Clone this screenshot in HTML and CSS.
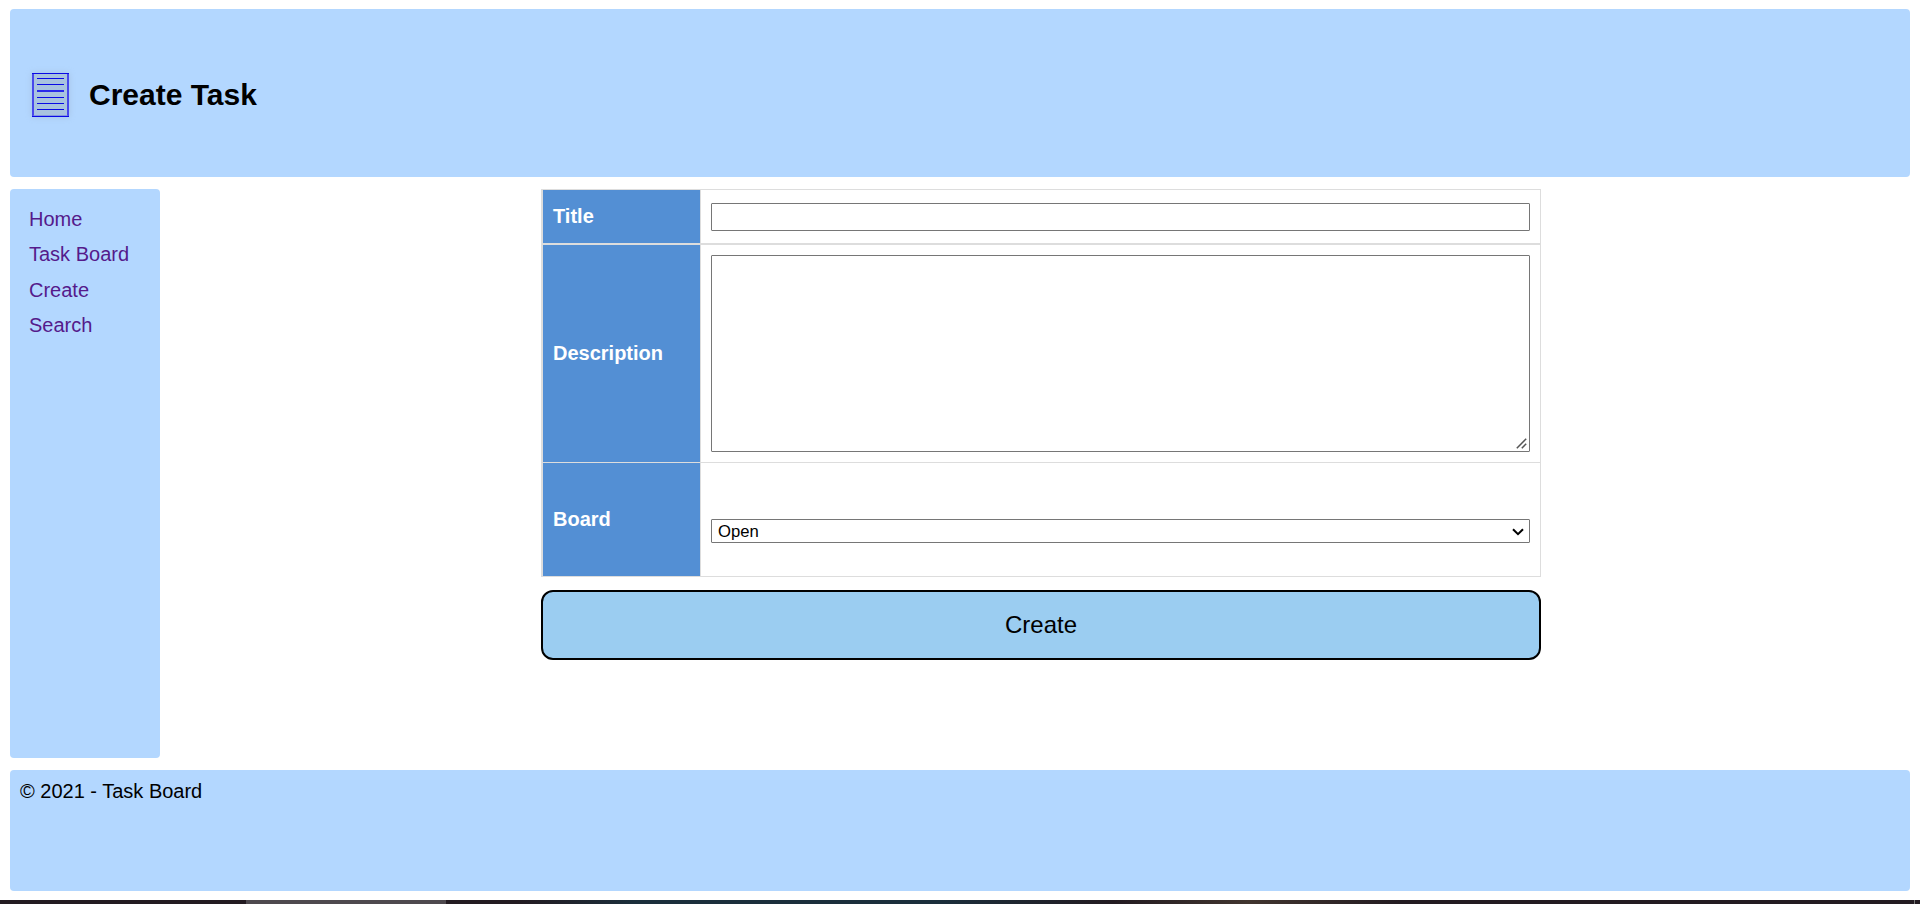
FILE: index.html
```html
<!DOCTYPE html>
<html lang="en">
<head>
<meta charset="utf-8">
<title>Create Task</title>
<link rel="stylesheet" href="styles.css">
</head>
<body>
<div class="page">
  <header class="header panel">
    <svg class="logo" width="57" height="65" viewBox="22 62 57 65">
      <defs><filter id="soft" x="-50%" y="-50%" width="200%" height="200%"><feGaussianBlur stdDeviation="3"/></filter></defs>
      <rect x="32" y="73" width="37" height="44" fill="#96abc4" opacity=".5" filter="url(#soft)"/>
      <rect x="33" y="73" width="35" height="43" fill="#a9c3df"/>
      <path d="M33 73v43M68 73v43" stroke="#4848ec" stroke-width="2"/>
      <path d="M33 115.5h35" stroke="#6a76e4" stroke-opacity=".6"/>
      <path d="M32 73.5h37M32 116.5h37" stroke="#0a0ae6"/>
      <path d="M37 78.5h27M37 84.5h27M37 97.5h27M37 103.5h27M37 109.5h27" stroke="#0a0ae6"/>
      <path d="M37 91h27" stroke="#2a2aea" stroke-width="2"/>
    </svg>
    <h1 class="heading">Create Task</h1>
  </header>
  <div class="middle">
    <nav class="nav panel">
      <a class="nav-link" href="#home">Home</a>
      <a class="nav-link" href="#board">Task Board</a>
      <a class="nav-link" href="#create">Create</a>
      <a class="nav-link" href="#search">Search</a>
    </nav>
    <main class="main">
      <form class="form">
        <div class="fields">
          <div class="row row-title">
            <label class="label" for="title">Title</label>
            <div class="cell"><input class="control input" id="title" type="text"></div>
          </div>
          <div class="row row-description">
            <label class="label" for="description">Description</label>
            <div class="cell"><div class="textarea-wrap">
              <textarea class="control textarea" id="description"></textarea>
              <svg class="grip" width="11" height="11" viewBox="0 0 11 11"><path d="M.8 10.2l9.4-9.4M5.8 10.2l4.4-4.4" fill="none" stroke="#555" stroke-width="1.5"/></svg>
            </div></div>
          </div>
          <div class="row row-board">
            <label class="label" for="board">Board</label>
            <div class="cell"><div class="select-wrap">
              <select class="control select" id="board"><option>Open</option></select>
              <svg class="arrow" width="12" height="8" viewBox="0 0 12 8"><path d="M1 1.2l5 5 5-5" fill="none" stroke="#000" stroke-width="2"/></svg>
            </div></div>
          </div>
        </div>
        <button class="submit" type="button">Create</button>
      </form>
    </main>
  </div>
  <footer class="footer panel">© 2021 - Task Board</footer>
  <div class="taskbar"><div class="taskbar-active"></div><div class="taskbar-edge"></div></div>
</div>
</body>
</html>
```
FILE: styles.css
```css
* { box-sizing: border-box; }
body {
  margin: 0;
  background: #fff;
  color: #000;
  font: 20px/23px "Liberation Sans", Arial, sans-serif;
  overflow: hidden;
}
.page {
  display: flex;
  flex-direction: column;
  height: 904px;
  padding-top: 9px;
}
.panel { background: #b3d7ff; border-radius: 4px; }
.header {
  display: flex;
  align-items: center;
  gap: 10px;
  height: 168px;
  margin: 0 10px 12px;
  padding: 3px 12px 0;
}
.logo { display: block; flex: none; }
.heading { margin: 0; font-size: 30px; line-height: 34px; }
.middle { display: flex; height: 569px; padding: 0 10px; }
.nav {
  display: flex;
  flex-direction: column;
  width: 150px;
  padding: 13px 19px;
}
.nav-link { color: #551a8b; text-decoration: none; line-height: 35.4px; white-space: nowrap; }
.main { flex: 1; padding-left: 381px; }
.form { display: flex; flex-direction: column; gap: 13px; width: 1000px; }
.fields { border: 1px solid #ddd; border-left-width: 2px; }
.row { display: flex; border-bottom: 1px solid #ddd; }
.row-title { height: 55px; border-bottom-width: 2px; }
.row-description { height: 218px; }
.row-board { height: 113px; border-bottom: 0; }
.label {
  display: flex;
  align-items: center;
  width: 157px;
  padding-left: 10px;
  background: #538fd4;
  color: #fff;
  font-weight: bold;
}
.cell {
  display: flex;
  flex: 1;
  align-items: center;
  padding: 0 10px;
  border-left: 1px solid #ddd;
}
.control {
  display: block;
  width: 100%;
  margin: 0;
  border: 1px solid #767676;
  border-radius: 1px;
  background: #fff;
  color: #000;
  font: 16.67px "Liberation Sans", Arial, sans-serif;
}
.input { height: 28px; }
.textarea-wrap { position: relative; width: 100%; }
.textarea { height: 197px; resize: none; }
.grip { position: absolute; right: 3px; bottom: 3px; pointer-events: none; }
.select-wrap { position: relative; width: 100%; margin-top: 23px; }
.select { height: 24px; padding: 0 6px; appearance: none; }
.arrow { position: absolute; right: 6px; top: 9px; pointer-events: none; }
.submit {
  height: 70px;
  padding: 0;
  border: 2px solid #000;
  border-radius: 12px;
  background: #9bcdf1;
  color: #000;
  font: 24px "Liberation Sans", Arial, sans-serif;
}
.footer { height: 121px; margin: 12px 10px 9px; padding: 10px; }
.taskbar {
  display: flex;
  justify-content: space-between;
  height: 4px;
  padding-left: 246px;
  background: linear-gradient(90deg, #231b21 0 27%, #1b2e3b 33% 49%, #231b21 58%, #41352f 65%, #231b21 73%);
}
.taskbar-active { width: 200px; background: #4e494e; }
.taskbar-edge { width: 1px; margin-right: 5px; background: #777; }
```
